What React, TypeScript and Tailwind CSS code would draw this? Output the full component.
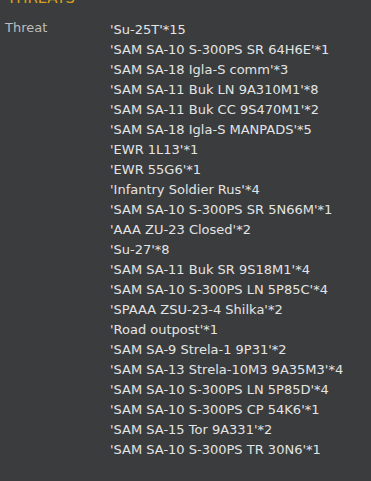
const threats = [
  "'Su-25T'*15",
  "'SAM SA-10 S-300PS SR 64H6E'*1",
  "'SAM SA-18 Igla-S comm'*3",
  "'SAM SA-11 Buk LN 9A310M1'*8",
  "'SAM SA-11 Buk CC 9S470M1'*2",
  "'SAM SA-18 Igla-S MANPADS'*5",
  "'EWR 1L13'*1",
  "'EWR 55G6'*1",
  "'Infantry Soldier Rus'*4",
  "'SAM SA-10 S-300PS SR 5N66M'*1",
  "'AAA ZU-23 Closed'*2",
  "'Su-27'*8",
  "'SAM SA-11 Buk SR 9S18M1'*4",
  "'SAM SA-10 S-300PS LN 5P85C'*4",
  "'SPAAA ZSU-23-4 Shilka'*2",
  "'Road outpost'*1",
  "'SAM SA-9 Strela-1 9P31'*2",
  "'SAM SA-13 Strela-10M3 9A35M3'*4",
  "'SAM SA-10 S-300PS LN 5P85D'*4",
  "'SAM SA-10 S-300PS CP 54K6'*1",
  "'SAM SA-15 Tor 9A331'*2",
  "'SAM SA-10 S-300PS TR 30N6'*1",
];

export default function App() {
  return (
    <div className="w-[371px] h-[481px] overflow-hidden bg-[#3a3c3e] font-['DejaVu_Sans',sans-serif]">
      {/* section title, scrolled mostly out of view */}
      <div className="mt-[-12px] h-5 pl-[7px] text-[15px] leading-5 text-[#d9a01c]">THREATS</div>

      <div className="grid grid-cols-[105px_1fr] pl-[5px] pt-3 text-[13px] leading-5">
        <div className="text-[#bdbdbd] -mt-[2px]">Threat</div>
        <div className="flex flex-col text-[#e4e4e4]">
          {threats.map((t, i) => (
            <div key={i} className="whitespace-nowrap">
              {t}
            </div>
          ))}
        </div>
      </div>
    </div>
  );
}
